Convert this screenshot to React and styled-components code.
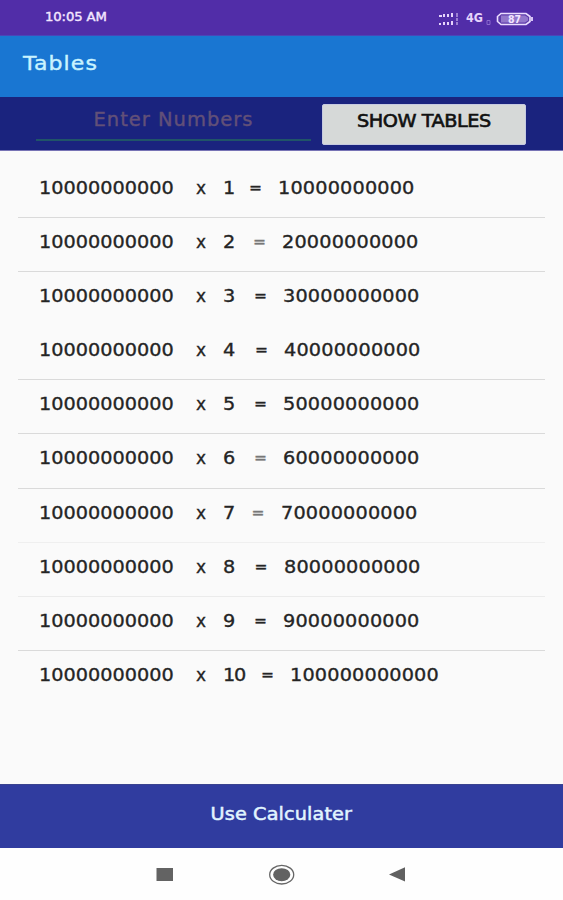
import React from "react";
import styled, { createGlobalStyle } from "styled-components";

const GlobalStyle = createGlobalStyle`
  * {
    box-sizing: border-box;
  }

  body {
    margin: 0;
    background: #fefefe;
    font-family: "DejaVu Sans", "Noto Sans", sans-serif;
  }
`;

const Screen = styled.div`
  width: 563px;
  height: 900px;
  display: flex;
  flex-direction: column;
  overflow: hidden;
`;

// wide lettering, stretched horizontally
const Wide = styled.span`
  display: inline-block;
  transform: scaleX(1.1);
  transform-origin: ${({ $origin }) => $origin || "left"} center;
`;

const StatusBar = styled.div`
  height: 36px;
  flex: none;
  display: flex;
  justify-content: space-between;
  padding: 0 29px 0 45px;
  background: #512da8;
  border-bottom: 1px solid #4a45b8;
  color: #f3e6ff;
`;

const Clock = styled.span`
  font-size: 12px;
  line-height: 35px;
  letter-spacing: -0.1px;
  -webkit-text-stroke: 0.4px;
`;

const AppBar = styled.header`
  height: 61px;
  flex: none;
  padding: 0 23px;
  background: #1976d2;
`;

const Title = styled.h1`
  margin: 0;
  font-size: 20px;
  font-weight: normal;
  line-height: 55px;
  letter-spacing: 1px;
  color: #c9f3ff;
  -webkit-text-stroke: 0.4px;
`;

const InputBar = styled.div`
  height: 54px;
  flex: none;
  display: flex;
  gap: 11px;
  padding: 7px 37px 0 36px;
  background: #1a237e;
  border-bottom: 1px solid #7773b5;
`;

const NumberInput = styled.input`
  width: 275px;
  height: 37px;
  padding: 0 0 4px;
  border: 0;
  border-bottom: 2px solid #205468;
  border-radius: 0;
  outline: 0;
  background: transparent;
  font-family: inherit;
  font-size: 19.5px;
  letter-spacing: 1px;
  text-align: center;
  color: #fff;

  &::placeholder {
    color: #625078;
    opacity: 1;
    -webkit-text-stroke: 0.4px;
  }
`;

const ShowButton = styled.button`
  width: 204px;
  height: 41px;
  padding: 0 0 7px;
  border: 1px solid #c6cae0;
  border-radius: 2px;
  background: #d6d9d8;
  font-family: inherit;
  font-size: 17.5px;
  letter-spacing: -0.4px;
  color: #111;
  -webkit-text-stroke: 0.6px;
`;

const List = styled.ul`
  flex: 1;
  margin: 0;
  padding: 13px 18px 0;
  list-style: none;
  background: #fafafa;
`;

const Row = styled.li`
  height: 54.1px;
  display: flex;
  padding-left: 21px;
  border-bottom: 1px solid ${({ $line }) => $line};
  font-size: 17.5px;
  line-height: 48px;
  color: #242424;
  white-space: nowrap;
  -webkit-text-stroke: 0.35px;
`;

const Base = styled.span`
  width: 157px;
`;

const Times = styled.span`
  width: 27px;
  font-size: 17px;
`;

const Multiplier = styled.span`
  width: ${({ $width }) => $width}px;
  letter-spacing: -1.1px;
`;

const Equals = styled.span`
  width: 29px;
  font-size: 15.5px;
  color: ${({ $faded }) => ($faded ? "#777" : "#242424")};
`;

const Product = styled.span`
  letter-spacing: 0.15px;
`;

const CalculatorButton = styled.button`
  height: 64px;
  flex: none;
  padding: 0 0 5px;
  border: 0;
  border-top: 1px solid #3a438f;
  background: #303c9f;
  font-family: inherit;
  font-size: 17.5px;
  letter-spacing: 0.1px;
  color: #e1f5ff;
  -webkit-text-stroke: 0.5px;
`;

const NavBar = styled.nav`
  height: 52px;
  flex: none;
  background: #fefefe;
`;

const StatusIcons = () => (
  <svg width="96" height="35" viewBox="438 0 96 35">
    <g fill="#e5d3fb">
      <path d="M439 17h3v-2h-3zM443 17h2v-3h-2zM447 17h2v-3h-2zM451 17h2v-4h-2zM439 25h2v-2h-2zM443 25h2v-3h-2zM447 25h2v-3h-2zM451 25h2v-4h-2z" />
      <path d="M456 13h2v4h-2zM456 18h2v3h-2zM456 22h2v3h-2z" opacity=".5" />
      <text x="466" y="22" fontSize="12" fontWeight="bold" textLength="17" lengthAdjust="spacingAndGlyphs">
        4G
      </text>
    </g>
    <path d="M487 20.500h3v4h-3z" fill="none" stroke="#8b6bce" />
    <path
      d="M501 13.500h25l4 3v5l-4 3h-25l-3.500-3v-5z"
      fill="#5e3cab"
      stroke="#eadcff"
      strokeWidth="1.600"
    />
    <path d="M501 15.500h24l3 2v3l-3 2h-24z" fill="#9277cb" />
    <path d="M531 17h2v4h-2z" fill="#d6c3f5" />
    <text x="508" y="23" fontSize="10" fontWeight="bold" fill="#f2e5ff" textLength="13" lengthAdjust="spacingAndGlyphs">
      87
    </text>
  </svg>
);

const NavIcons = () => (
  <svg width="563" height="52" viewBox="0 848 563 52">
    <rect x="156.500" y="868" width="16.500" height="13" fill="#636363" />
    <ellipse cx="281.700" cy="874.700" rx="12" ry="9.300" fill="none" stroke="#666" strokeWidth="1.300" />
    <ellipse cx="281.700" cy="874.700" rx="8.600" ry="6.500" fill="#626262" />
    <path d="M389 874.500l16-7.300v14.300z" fill="#606060" />
  </svg>
);

const rows = [
  { n: 1, width: 26, line: "#dadada" },
  { n: 2, width: 30, line: "#dadada", faded: true },
  { n: 3, width: 31, line: "#fafafa" },
  { n: 4, width: 32, line: "#dadada" },
  { n: 5, width: 31, line: "#dadada" },
  { n: 6, width: 31, line: "#dadada", faded: true },
  { n: 7, width: 28.5, line: "#efefef", faded: true },
  { n: 8, width: 31.5, line: "#ebebeb" },
  { n: 9, width: 31, line: "#dadada" },
  { n: 10, width: 38, line: "#fafafa" },
];

const base = 10000000000;

const App = () => {
  return (
    <Screen>
      <GlobalStyle />
      <StatusBar>
        <Clock>
          <Wide>10:05 AM</Wide>
        </Clock>
        <StatusIcons />
      </StatusBar>
      <AppBar>
        <Title>
          <Wide>Tables</Wide>
        </Title>
      </AppBar>
      <InputBar>
        <NumberInput placeholder="Enter Numbers" />
        <ShowButton>
          <Wide $origin="center">SHOW TABLES</Wide>
        </ShowButton>
      </InputBar>
      <List>
        {rows.map(({ n, width, line, faded }) => (
          <Row key={n} $line={line}>
            <Base>
              <Wide>{base}</Wide>
            </Base>
            <Times>x</Times>
            <Multiplier $width={width}>
              <Wide>{n}</Wide>
            </Multiplier>
            <Equals $faded={faded}>=</Equals>
            <Product>
              <Wide>{base * n}</Wide>
            </Product>
          </Row>
        ))}
      </List>
      <CalculatorButton>
        <Wide $origin="center">Use Calculater</Wide>
      </CalculatorButton>
      <NavBar>
        <NavIcons />
      </NavBar>
    </Screen>
  );
};

export default App;
